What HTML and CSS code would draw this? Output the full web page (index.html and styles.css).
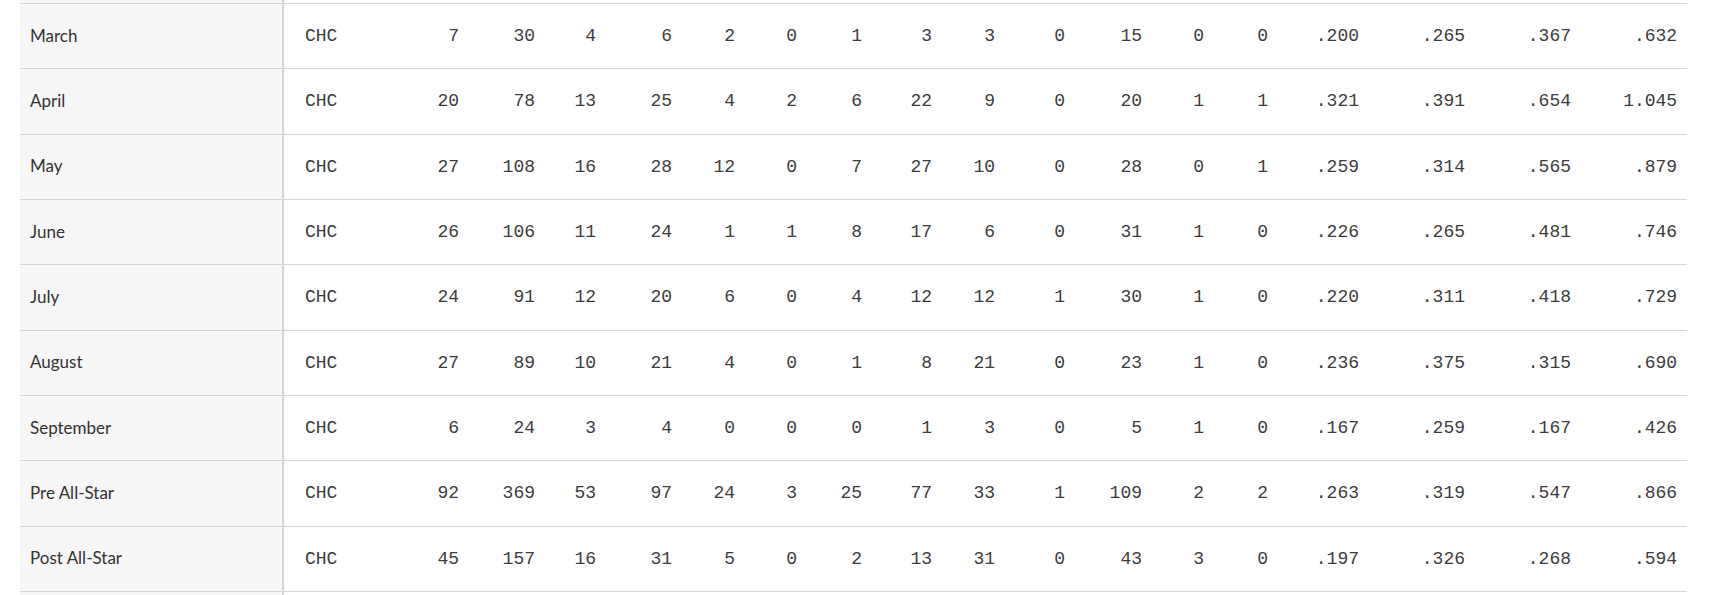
FILE: index.html
```html
<!DOCTYPE html>
<html lang="en">
<head>
<meta charset="utf-8">
<title>Splits</title>
<link rel="stylesheet" href="styles.css">
</head>
<body>
<div class="wrap">
<table class="splits">
<colgroup>
<col class="c-split"><col class="c-team"><col class="c-g"><col class="c-ab"><col class="c-r"><col class="c-h"><col class="c-2b"><col class="c-3b"><col class="c-hr"><col class="c-rbi"><col class="c-bb"><col class="c-ibb"><col class="c-so"><col class="c-sb"><col class="c-cs"><col class="c-avg"><col class="c-obp"><col class="c-slg"><col class="c-ops">
</colgroup>
<tbody>
<tr class="stub stub-top"><td class="split"></td><td colspan="18"></td></tr>
<tr><td class="split">March</td><td class="team">CHC</td><td>7</td><td>30</td><td>4</td><td>6</td><td>2</td><td>0</td><td>1</td><td>3</td><td>3</td><td>0</td><td>15</td><td>0</td><td>0</td><td>.200</td><td>.265</td><td>.367</td><td>.632</td></tr>
<tr><td class="split">April</td><td class="team">CHC</td><td>20</td><td>78</td><td>13</td><td>25</td><td>4</td><td>2</td><td>6</td><td>22</td><td>9</td><td>0</td><td>20</td><td>1</td><td>1</td><td>.321</td><td>.391</td><td>.654</td><td>1.045</td></tr>
<tr><td class="split">May</td><td class="team">CHC</td><td>27</td><td>108</td><td>16</td><td>28</td><td>12</td><td>0</td><td>7</td><td>27</td><td>10</td><td>0</td><td>28</td><td>0</td><td>1</td><td>.259</td><td>.314</td><td>.565</td><td>.879</td></tr>
<tr><td class="split">June</td><td class="team">CHC</td><td>26</td><td>106</td><td>11</td><td>24</td><td>1</td><td>1</td><td>8</td><td>17</td><td>6</td><td>0</td><td>31</td><td>1</td><td>0</td><td>.226</td><td>.265</td><td>.481</td><td>.746</td></tr>
<tr><td class="split">July</td><td class="team">CHC</td><td>24</td><td>91</td><td>12</td><td>20</td><td>6</td><td>0</td><td>4</td><td>12</td><td>12</td><td>1</td><td>30</td><td>1</td><td>0</td><td>.220</td><td>.311</td><td>.418</td><td>.729</td></tr>
<tr><td class="split">August</td><td class="team">CHC</td><td>27</td><td>89</td><td>10</td><td>21</td><td>4</td><td>0</td><td>1</td><td>8</td><td>21</td><td>0</td><td>23</td><td>1</td><td>0</td><td>.236</td><td>.375</td><td>.315</td><td>.690</td></tr>
<tr><td class="split">September</td><td class="team">CHC</td><td>6</td><td>24</td><td>3</td><td>4</td><td>0</td><td>0</td><td>0</td><td>1</td><td>3</td><td>0</td><td>5</td><td>1</td><td>0</td><td>.167</td><td>.259</td><td>.167</td><td>.426</td></tr>
<tr><td class="split">Pre All-Star</td><td class="team">CHC</td><td>92</td><td>369</td><td>53</td><td>97</td><td>24</td><td>3</td><td>25</td><td>77</td><td>33</td><td>1</td><td>109</td><td>2</td><td>2</td><td>.263</td><td>.319</td><td>.547</td><td>.866</td></tr>
<tr><td class="split">Post All-Star</td><td class="team">CHC</td><td>45</td><td>157</td><td>16</td><td>31</td><td>5</td><td>0</td><td>2</td><td>13</td><td>31</td><td>0</td><td>43</td><td>3</td><td>0</td><td>.197</td><td>.326</td><td>.268</td><td>.594</td></tr>
<tr class="stub stub-bottom"><td class="split"></td><td colspan="18"></td></tr>
</tbody>
</table>
</div>
</body>
</html>
```

FILE: styles.css
```css
html, body {
  margin: 0;
  padding: 0;
  background: #ffffff;
}

body {
  overflow: hidden;
  height: 595px;
}

.wrap {
  padding-left: 20px;
}

.splits {
  table-layout: fixed;
  width: 1667px;
  border-collapse: separate;
  border-spacing: 0;
  color: #3c3c3c;
  font-family: "Liberation Mono", "Cousine", monospace;
  font-size: 18px;
}

.c-split { width: 264px; }
.c-team { width: 106px; }
.c-g { width: 79px; }
.c-ab { width: 76px; }
.c-r { width: 61px; }
.c-h { width: 76px; }
.c-2b { width: 63px; }
.c-3b { width: 62px; }
.c-hr { width: 65px; }
.c-rbi { width: 70px; }
.c-bb { width: 63px; }
.c-ibb { width: 70px; }
.c-so { width: 77px; }
.c-sb { width: 62px; }
.c-cs { width: 64px; }
.c-avg { width: 91px; }
.c-obp { width: 106px; }
.c-slg { width: 106px; }
.c-ops { width: 106px; }

.splits tr {
  height: 65.33px;
}

.splits td {
  box-sizing: border-box;
  padding: 0 10px 0 0;
  text-align: right;
  vertical-align: middle;
  border-bottom: 1px solid #d6d6d6;
  white-space: nowrap;
  line-height: 20px;
}

.splits td.split {
  background: #f7f7f7;
  border-right: 2px solid #d4d4d4;
  text-align: left;
  padding: 0 0 1px 10px;
  color: #333333;
  font-family: "Lato", "Liberation Sans", sans-serif;
  font-size: 17px;
}

.splits td.team {
  text-align: left;
  padding: 0 0 0 21px;
}

.splits tr.stub-top {
  height: 4px;
}

.splits tr.stub-bottom {
  height: 10px;
}

.splits tr.stub-bottom td {
  border-bottom: none;
  padding: 0;
}
```
